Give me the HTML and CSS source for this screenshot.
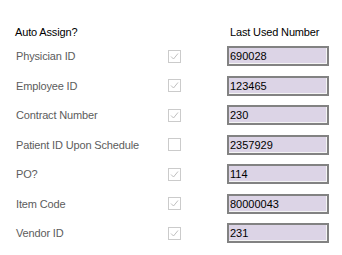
FILE: index.html
```html
<!DOCTYPE html>
<html>

<head>
  <title>Numbering</title>
  <link rel="stylesheet" href="styles.css">
</head>

<body>
  <div class="form">
    <div class="head">
      <span class="head-auto">Auto Assign?</span>
      <span></span>
      <span class="head-last">Last Used Number</span>
    </div>
    <div class="rows">
      <span class="label">Physician ID</span>
      <span class="check on"><svg viewBox="0 0 13 13"><path d="M3 6.5 L5.5 9 L10 3.5" /></svg></span>
      <span class="box">690028</span>

      <span class="label">Employee ID</span>
      <span class="check on"><svg viewBox="0 0 13 13"><path d="M3 6.5 L5.5 9 L10 3.5" /></svg></span>
      <span class="box">123465</span>

      <span class="label">Contract Number</span>
      <span class="check on"><svg viewBox="0 0 13 13"><path d="M3 6.5 L5.5 9 L10 3.5" /></svg></span>
      <span class="box">230</span>

      <span class="label">Patient ID Upon Schedule</span>
      <span class="check"></span>
      <span class="box">2357929</span>

      <span class="label">PO?</span>
      <span class="check on"><svg viewBox="0 0 13 13"><path d="M3 6.5 L5.5 9 L10 3.5" /></svg></span>
      <span class="box">114</span>

      <span class="label">Item Code</span>
      <span class="check on"><svg viewBox="0 0 13 13"><path d="M3 6.5 L5.5 9 L10 3.5" /></svg></span>
      <span class="box">80000043</span>

      <span class="label">Vendor ID</span>
      <span class="check on"><svg viewBox="0 0 13 13"><path d="M3 6.5 L5.5 9 L10 3.5" /></svg></span>
      <span class="box">231</span>
    </div>
  </div>
</body>

</html>
```

FILE: styles.css
```css
body {
  margin: 0;
  background: #fff;
  font-family: "Liberation Sans", Arial, sans-serif;
  font-size: 11px;
  color: #000;
}

.form {
  padding: 23px 0 0 16px;
}

.head,
.rows {
  display: grid;
  grid-template-columns: 152px 13px 102px;
  column-gap: 0;
}

.head {
  height: 18px;
  line-height: 18px;
  margin-bottom: 5px;
  letter-spacing: -0.15px;
}

.head-auto {
  margin-left: -1px;
}

.head-last {
  grid-column: 3;
  margin-left: 46px;
  padding-left: 3px;
  white-space: nowrap;
}

.rows {
  grid-template-columns: 152px 13px 102px;
  grid-auto-rows: 20px;
  row-gap: 9.5px;
  align-items: center;
}

.rows .box {
  margin-left: 46px;
}

.label {
  color: #5c5c5c;
  white-space: nowrap;
  letter-spacing: -0.15px;
}

.check {
  width: 13px;
  height: 13px;
  box-sizing: border-box;
  border: 1px solid #cbcbcb;
  background: #fff;
  position: relative;
}

.check svg {
  position: absolute;
  left: -1px;
  top: -1px;
  width: 13px;
  height: 13px;
}

.check path {
  fill: none;
  stroke: #b8b8b8;
  stroke-width: 0.9;
}

.box {
  display: block;
  width: 102px;
  height: 20px;
  box-sizing: border-box;
  border: 2px solid #828282;
  box-shadow: inset -1px -1px 0 #f4f4f4;
  background: #dcd4e6;
  padding-left: 1px;
  line-height: 16px;
  color: #000;
  overflow: hidden;
}
```
